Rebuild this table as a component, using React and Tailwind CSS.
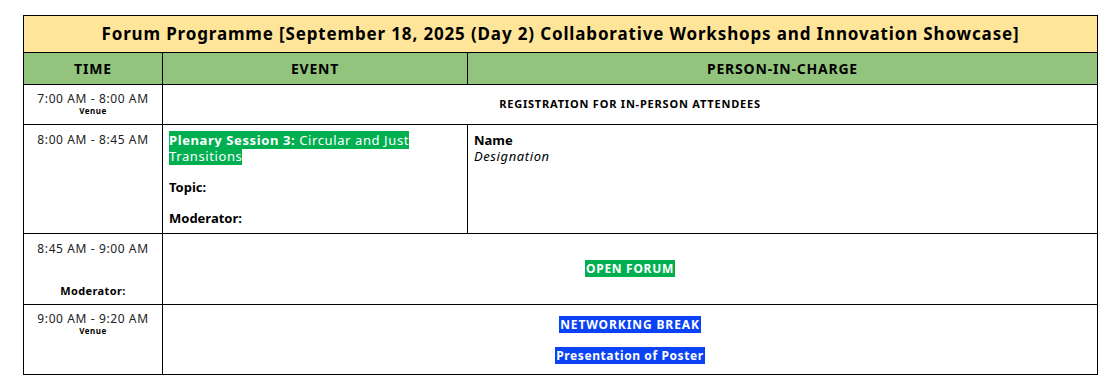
export default function App() {
  const font = { fontFamily: '"Noto Sans", "Open Sans", sans-serif' }
  return (
    <div className="w-[1118px] h-[376px] bg-white pt-[15px] pl-[23px]" style={font}>
      <table className="border-collapse table-fixed w-[1074px] text-black">
        <colgroup>
          <col className="w-[139px]" />
          <col className="w-[305px]" />
          <col className="w-[630px]" />
        </colgroup>
        <tbody>
          <tr className="h-[37px] bg-[#ffe599]">
            <td colSpan={3} className="border border-black text-center font-bold text-[17px] tracking-[0.85px]">
              Forum Programme [September 18, 2025 (Day 2) Collaborative Workshops and Innovation Showcase]
            </td>
          </tr>
          <tr className="h-[32px] bg-[#93c47d] text-[14px] font-bold tracking-[0.8px]">
            <td className="border border-black text-center">TIME</td>
            <td className="border border-black text-center">EVENT</td>
            <td className="border border-black text-center">PERSON-IN-CHARGE</td>
          </tr>
          <tr className="h-[40px]">
            <td className="border border-black text-center align-top pt-[7px] leading-[14px]">
              <div className="text-[12px] text-[#222] tracking-[0.6px]">7:00 AM - 8:00 AM</div>
              <div className="text-[8px] font-bold leading-[10px] tracking-[0.5px]">Venue</div>
            </td>
            <td colSpan={2} className="border border-black text-center text-[11px] font-bold tracking-[0.8px]">
              REGISTRATION FOR IN-PERSON ATTENDEES
            </td>
          </tr>
          <tr className="h-[109px]">
            <td className="border border-black text-center align-top pt-[7px]">
              <div className="text-[12px] leading-[16px] text-[#222] tracking-[0.6px]">8:00 AM - 8:45 AM</div>
            </td>
            <td className="border border-black align-top px-[6px] pt-[7px] text-[13px] leading-[16px]">
              <div className="pr-[50px] text-white tracking-[0.6px]">
                <span className="bg-[#00b050] font-bold">Plenary Session 3:</span>
                <span className="bg-[#00b050]"> Circular and Just Transitions</span>
              </div>
              <div className="font-bold mt-[15px]">Topic:</div>
              <div className="font-bold mt-[15px]">Moderator:</div>
            </td>
            <td className="border border-black align-top px-[6px] pt-[7px] text-[13px] leading-[16px]">
              <div className="font-bold">Name</div>
              <div className="italic tracking-[0.6px]">Designation</div>
            </td>
          </tr>
          <tr className="h-[71px]">
            <td className="border border-black text-center align-top pt-[7px] pb-[6px]">
              <div className="flex flex-col h-[57px] justify-between">
                <div className="text-[12px] leading-[16px] text-[#222] tracking-[0.6px]">8:45 AM - 9:00 AM</div>
                <div className="text-[11px] font-bold leading-[14px] tracking-[0.4px]">Moderator:</div>
              </div>
            </td>
            <td colSpan={2} className="border border-black text-center text-[12px] font-bold tracking-[0.7px]">
              <span className="bg-[#00b050] text-white px-[1px]">OPEN FORUM</span>
            </td>
          </tr>
          <tr className="h-[70px]">
            <td className="border border-black text-center align-top pt-[7px] leading-[14px]">
              <div className="text-[12px] text-[#222] tracking-[0.6px]">9:00 AM - 9:20 AM</div>
              <div className="text-[8px] font-bold leading-[10px] tracking-[0.5px]">Venue</div>
            </td>
            <td colSpan={2} className="border border-black text-center align-top pt-[12px] text-[12px] font-bold leading-[16px]">
              <div>
                <span className="bg-[#0a43f5] text-white px-[1px] tracking-[0.9px]">NETWORKING BREAK</span>
              </div>
              <div className="mt-[15px]">
                <span className="bg-[#0a43f5] text-white px-[1px] tracking-[0.6px]">Presentation of Poster</span>
              </div>
            </td>
          </tr>
        </tbody>
      </table>
    </div>
  )
}
